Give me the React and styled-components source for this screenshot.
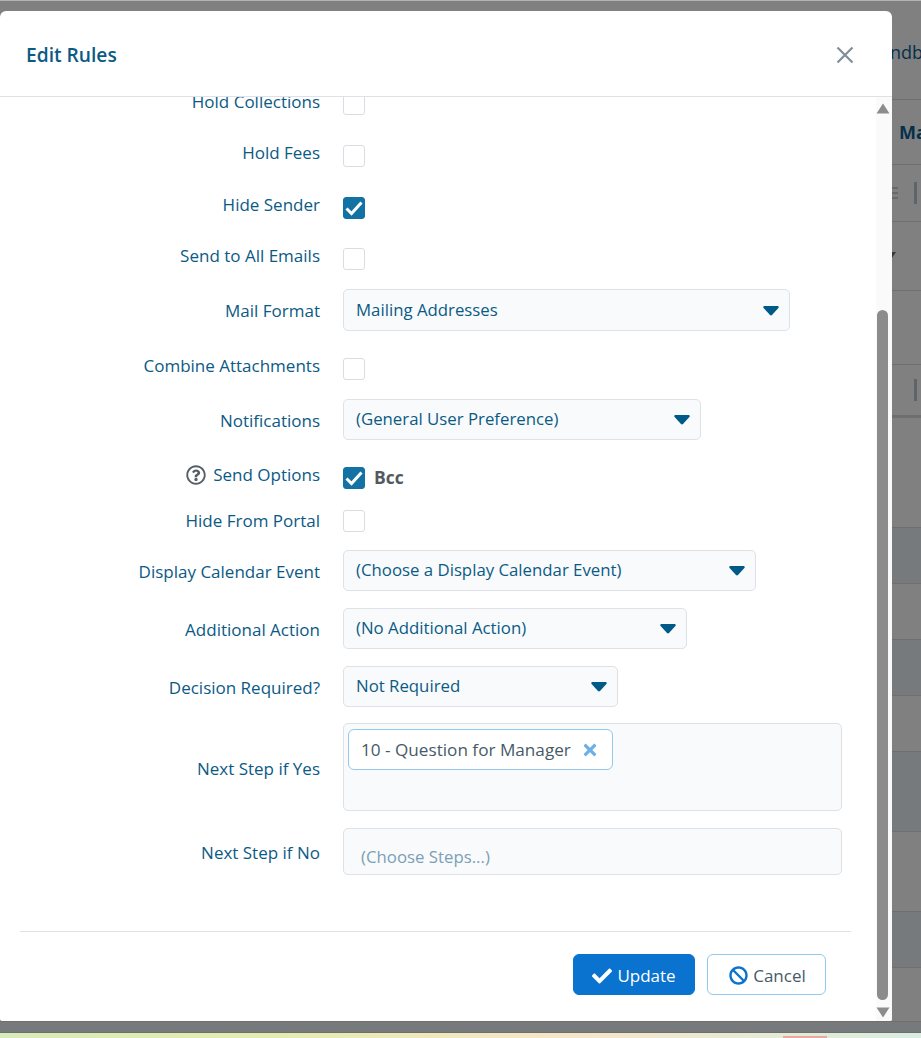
import React from "react";
import styled, { createGlobalStyle } from "styled-components";
import { FaBan, FaCheck, FaTimes, FaRegQuestionCircle } from "react-icons/fa";

const Global = createGlobalStyle`
  html, body { margin: 0; padding: 0; height: 100%; overflow: hidden; }
  body { font-family: "Open Sans", "Noto Sans", "Liberation Sans", sans-serif; background: #808080; }
`;

const Page = styled.div`
  position: relative; width: 921px; height: 1038px; box-sizing: border-box; overflow: hidden;
  background: #808080; border-top: 1px solid #b4b4b4;
  display: flex; flex-direction: column;
`;
const BgRow = styled.div`
  height: ${p => p.$h}px; flex: none; box-sizing: border-box;
  background: ${p => (p.$alt ? "#767a7d" : "#808080")};
  border-bottom: ${p => p.$line || 1}px solid #6f6f6f;
  display: flex; align-items: center; justify-content: flex-start;
  padding-left: 890px; overflow: hidden; white-space: nowrap;
`;
const BgText = styled.span`
  flex: none; font-size: ${p => p.$size}px; font-weight: ${p => p.$weight};
  color: #05304a; margin: 0 0 ${p => p.$lift}px ${p => p.$indent}px;
`;
const BgBar = styled.span`
  flex: none; width: 3px; height: 22px; background: #5f6468; margin-left: ${p => p.$indent}px;
`;
const BgMenu = styled.svg`
  flex: none; width: 8px; height: 14px; stroke: #666a6d; stroke-width: 2; margin-right: 16px;
`;
const BgCaret = styled.svg`
  flex: none; width: 6px; height: 6px; fill: #2f3a42; margin-bottom: 2px;
`;
const PastelStrip = styled.div`
  flex: 1; display: flex; justify-content: flex-end; align-items: flex-end; padding-right: 94px;
  background: linear-gradient(90deg, #d9ebb9 0%, #e5ecb0 30%, #f6e6c8 62%, #d8eee0 100%);
`;
const PastelMark = styled.span`
  width: 44px; height: 2px; background: #e7a9a0;
`;
const Modal = styled.div`
  position: absolute; left: 0; top: 10px; width: 892px; height: 1010px; background: #fff;
  border-radius: 6px 6px 2px 2px; display: flex; flex-direction: column; overflow: hidden;
`;
const Header = styled.header`
  height: 86px; flex: none; box-sizing: border-box; border-bottom: 1px solid #dee2e6;
  display: flex; align-items: center; justify-content: space-between; padding: 2px 38px 0 26px;
`;
const Title = styled.h2`
  margin: 0; font-size: 19.2px; font-weight: 600; color: #0b5a85;
`;
const CloseIcon = styled.svg`
  width: 18px; height: 18px; stroke: #7f8f99; stroke-width: 2.2; fill: none; display: block;
`;
const Main = styled.div`
  flex: 1; min-height: 0; display: flex;
`;
const Content = styled.div`
  flex: 1; min-width: 0; display: flex; flex-direction: column;
`;
const FormViewport = styled.div`
  height: 834px; flex: none; overflow: hidden;
`;
const Form = styled.div`
  margin-top: -4px; display: flex; flex-direction: column;
`;
const Row = styled.div`
  display: grid; grid-template-columns: 320px 1fr; column-gap: 23px;
  margin-top: ${p => p.$gap}px; height: ${p => p.$h}px;
`;
const Label = styled.label`
  display: flex; justify-content: flex-end; align-items: center; gap: 7px;
  height: 22px; margin-top: ${p => p.$offset}px;
  font-size: 17px; color: #0b5a85; white-space: nowrap;
`;
const Help = styled(FaRegQuestionCircle)`
  width: 20px; height: 20px; color: #555f66; margin-top: 2px;
`;
const Box = styled.span`
  width: 22px; height: 22px; box-sizing: border-box; border-radius: 3px;
  background: ${p => (p.$on ? "#1272a4" : "#fff")};
  border: 1px solid ${p => (p.$on ? "#1272a4" : "#d9dde1")};
  display: flex; align-items: center; justify-content: center; flex: none;
`;
const Tick = styled.svg`
  width: 20px; height: 20px; fill: none; stroke: #fff; stroke-width: 3;
`;
const Check = styled.div`
  height: 22px; display: flex; align-items: center; gap: 9px;
`;
const CheckText = styled.span`
  font-size: 17.5px; line-height: 18px; font-weight: 700; color: #55595d; margin-bottom: 3px;
`;
const Select = styled.div`
  width: ${p => p.$w}px; height: 100%; box-sizing: border-box; background: #f8fafc;
  border: 1px solid #dee2e6; border-radius: 5px; padding: 0 10px 2px 12px;
  display: flex; align-items: center; justify-content: space-between;
  font-size: 16.8px; color: #0b5a85;
`;
const Caret = styled.svg`
  width: 16px; height: 10px; fill: #005a87; margin-top: 3px; flex: none;
`;
const Multi = styled.div`
  width: 499px; height: 100%; box-sizing: border-box; background: #f8fafc;
  border: 1px solid #dee2e6; border-radius: 5px; padding: ${p => (p.$empty ? "16px 17px 0" : "5px 4px")};
  display: flex; align-items: flex-start;
`;
const Chip = styled.span`
  height: 41px; box-sizing: border-box; background: #fff; border: 1px solid #93c8ea; border-radius: 6px;
  padding: 0 14px 0 12px; display: flex; align-items: center; gap: 11px;
  font-size: 17.15px; color: #475a68; white-space: nowrap;
`;
const ChipX = styled(FaTimes)`
  width: 16px; height: 18px; color: #6cb0e6; flex: none;
`;
const Placeholder = styled.span`
  font-size: 16.8px; color: #7c9fb6;
`;
const Footer = styled.footer`
  margin: 0 25px 0 20px; border-top: 1px solid #dee2e6; padding: 22px 25px 0 0;
  display: flex; justify-content: flex-end; gap: 12px;
`;
const Button = styled.button`
  height: 41px; width: ${p => p.$w}px; box-sizing: border-box; border-radius: 6px; padding: 2px 0 0 ${p => (p.$primary ? 0 : 2)}px;
  display: flex; align-items: center; justify-content: center; gap: ${p => p.$space}px;
  font: 400 17px "Open Sans", sans-serif;
  background: ${p => (p.$primary ? "#0a72cf" : "#fff")};
  color: ${p => (p.$primary ? "#fff" : "#475a68")};
  border: 1px solid ${p => (p.$primary ? "#0a72cf" : "#93c8ea")};
`;
const Scrollbar = styled.div`
  width: 16px; flex: none; background: #fafafa; display: flex; flex-direction: column; align-items: flex-start;
`;
const Arrow = styled.svg`
  width: 14px; height: 11px; fill: #8c8c8c; margin-top: ${p => p.$top}px; flex: none;
`;
const Thumb = styled.div`
  width: 11px; height: 690px; margin: 196px 0 0 1px; background: #8c8c8c; border-radius: 6px;
  flex: none;
`;

const caret = (
  <Caret viewBox="0 0 16 10"><path d="M1.5 0h13c1 0 1.6 1.2.9 2l-6.4 7c-.5.5-1.5.5-2 0L.6 2C-.1 1.2.5 0 1.5 0z" /></Caret>
);

const rows = [
  { label: "Hold Collections", kind: "box", gap: 0, h: 22, off: -3 },
  { label: "Hold Fees", kind: "box", gap: 30, h: 22, off: -4 },
  { label: "Hide Sender", kind: "box", on: true, gap: 30, h: 22, off: -4 },
  { label: "Send to All Emails", kind: "box", gap: 29, h: 22, off: -4 },
  { label: "Mail Format", kind: "select", value: "Mailing Addresses", w: 447, gap: 19, h: 42, off: 10 },
  { label: "Combine Attachments", kind: "box", gap: 27, h: 22, off: -4 },
  { label: "Notifications", kind: "select", value: "(General User Preference)", w: 358, gap: 19, h: 41, off: 10 },
  { label: "Send Options", help: true, kind: "box", on: true, text: "Bcc", gap: 27, h: 22, off: -4 },
  { label: "Hide From Portal", kind: "box", gap: 21, h: 22, off: -1 },
  { label: "Display Calendar Event", kind: "select", value: "(Choose a Display Calendar Event)", w: 413, gap: 18, h: 41, off: 10 },
  { label: "Additional Action", kind: "select", value: "(No Additional Action)", w: 344, gap: 17, h: 41, off: 10 },
  { label: "Decision Required?", kind: "select", value: "Not Required", w: 275, gap: 17, h: 41, off: 10 },
  { label: "Next Step if Yes", kind: "chip", gap: 16, h: 88, off: 34 },
  { label: "Next Step if No", kind: "empty", gap: 17, h: 47, off: 13 },
];

const Field = ({ r }) => {
  if (r.kind === "box") {
    return (
      <Check>
        <Box $on={r.on}>
          {r.on && <Tick viewBox="0 0 20 20"><path d="M2.5 10.5l5 5 10-11" /></Tick>}
        </Box>
        {r.text && <CheckText>{r.text}</CheckText>}
      </Check>
    );
  }
  if (r.kind === "select") return <Select $w={r.w}>{r.value}{caret}</Select>;
  if (r.kind === "chip") {
    return (
      <Multi><Chip>10 - Question for Manager<ChipX /></Chip></Multi>
    );
  }
  return <Multi $empty><Placeholder>(Choose Steps...)</Placeholder></Multi>;
};

const bg = [
  { h: 99, text: "ndbe", size: 18, weight: 400, indent: 0, lift: -4 },
  { h: 65, text: "Ma", size: 18, weight: 700, indent: 9, lift: 0 },
  { h: 57, menu: true, bar: 0 },
  { h: 69, caret: true },
  { h: 74 },
  { h: 53, bar: 24, line: 3 },
  { h: 110 },
  { h: 56, alt: true },
  { h: 56 },
  { h: 56, alt: true },
  { h: 56 },
  { h: 80, alt: true },
  { h: 80 },
  { h: 56, alt: true },
  { h: 54 },
  { h: 11, alt: true },
];

export default function App() {
  return (
    <Page>
      <Global />
      {bg.map((b, i) => (
        <BgRow key={i} $h={b.h} $alt={b.alt} $line={b.line}>
          {b.text && <BgText $size={b.size} $weight={b.weight} $indent={b.indent} $lift={b.lift}>{b.text}</BgText>}
          {b.menu && <BgMenu viewBox="0 0 8 14"><path d="M0 2h8M0 7h8M0 12h8" /></BgMenu>}
          {b.caret && <BgCaret viewBox="0 0 6 6"><path d="M0 0h6L2 6z" /></BgCaret>}
          {b.bar !== undefined && <BgBar $indent={b.bar} />}
        </BgRow>
      ))}
      <PastelStrip><PastelMark /></PastelStrip>
      <Modal>
        <Header>
          <Title>Edit Rules</Title>
          <CloseIcon viewBox="0 0 18 18"><path d="M1.5 1.5l15 15M16.5 1.5l-15 15" /></CloseIcon>
        </Header>
        <Main>
          <Content>
            <FormViewport>
              <Form>
                {rows.map(r => (
                  <Row key={r.label} $gap={r.gap} $h={r.h}>
                    <Label $offset={r.off}>
                      {r.help && <Help />}
                      {r.label}
                    </Label>
                    <Field r={r} />
                  </Row>
                ))}
              </Form>
            </FormViewport>
            <Footer>
              <Button $primary $w={122} $space={5}><FaCheck size={20} />Update</Button>
              <Button $w={119} $space={5}><FaBan size={19} color="#0a72cf" />Cancel</Button>
            </Footer>
          </Content>
          <Scrollbar>
            <Arrow $top={6} viewBox="0 0 14 11"><path d="M7 0.5l6.5 10H0.5z" /></Arrow>
            <Thumb />
            <Arrow $top={7} viewBox="0 0 14 11"><path d="M0.5 0.5h13L7 10.5z" /></Arrow>
          </Scrollbar>
        </Main>
      </Modal>
    </Page>
  );
}
